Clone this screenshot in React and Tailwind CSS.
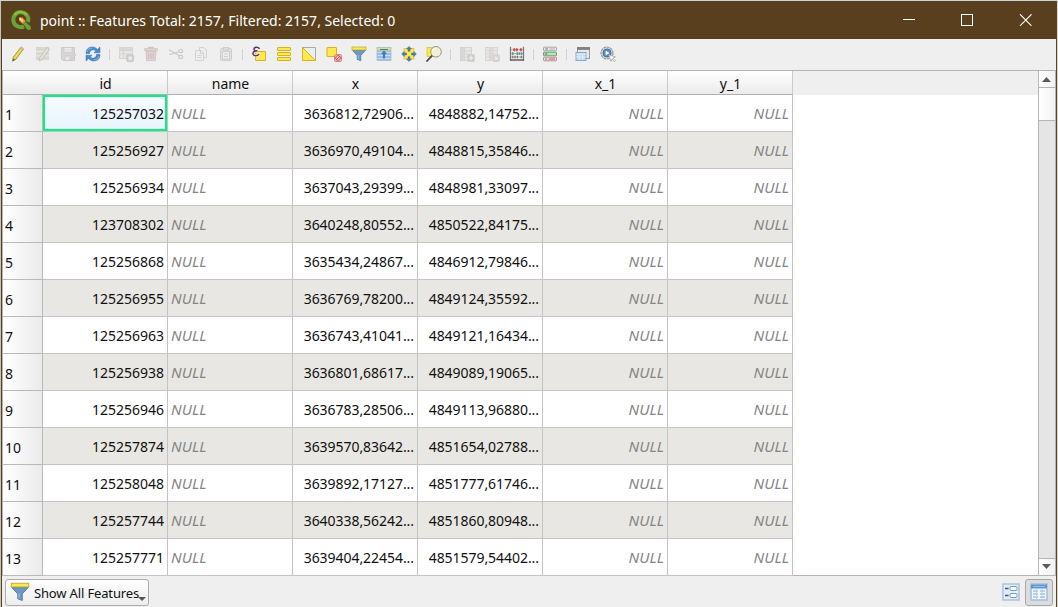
import React from "react";

const rows = [
  ["125257032", "3636812,72906...", "4848882,14752..."],
  ["125256927", "3636970,49104...", "4848815,35846..."],
  ["125256934", "3637043,29399...", "4848981,33097..."],
  ["123708302", "3640248,80552...", "4850522,84175..."],
  ["125256868", "3635434,24867...", "4846912,79846..."],
  ["125256955", "3636769,78200...", "4849124,35592..."],
  ["125256963", "3636743,41041...", "4849121,16434..."],
  ["125256938", "3636801,68617...", "4849089,19065..."],
  ["125256946", "3636783,28506...", "4849113,96880..."],
  ["125257874", "3639570,83642...", "4851654,02788..."],
  ["125258048", "3639892,17127...", "4851777,61746..."],
  ["125257744", "3640338,56242...", "4851860,80948..."],
  ["125257771", "3639404,22454...", "4851579,54402..."],
];

const Y = "#fce94f";
const YS = "#d4b41c";

const Funnel = () => (
  <>
    <path d="M1.5 4.5H14.5L9.8 9.5V14.8L6.2 13.4V9.5Z" fill="#6d97c4" stroke="#5580ab" strokeWidth=".8" />
    <path d="M7.3 9V13" stroke="#9cbcdc" />
    <rect x="1" y="1" width="14" height="3" fill={Y} stroke="#b9a63a" strokeWidth=".7" />
  </>
);

const icons = {
  pencil: (
    <>
      <path d="M3.2 11.2L10.6 1.6L13.2 3.4L6 13.2L2.6 15.2Z" fill="#e4cf3c" stroke="#8f8431" strokeWidth=".7" />
      <path d="M4.6 12L11.9 2.6" stroke="#f8ec82" strokeWidth=".9" />
      <path d="M10.3 2L11.2 .8L13.9 2.6L13 3.8Z" fill="#d8d4c8" stroke="#9b968a" strokeWidth=".5" />
      <path d="M3.1 12.5L2.5 15.3L5 13.8Z" fill="#555" />
    </>
  ),
  multiEdit: (
    <g>
      <path d="M1 3H14M1 7.6H14M1 12.2H14" stroke="#d8d7d0" strokeWidth="3.8" />
      <path d="M4.4 12.3L12.2 1.4L14.6 3L7 13.6L4 15Z" fill="#e3e0db" stroke="#c2bab8" strokeWidth=".8" />
    </g>
  ),
  save: (
    <g fill="none" stroke="#cbcbcb">
      <path d="M1.5 1.5H14.5V14.5H3L1.5 13Z" fill="#d7d7d7" />
      <rect x="4" y="1.5" width="8" height="5.4" fill="#eee" />
      <path d="M5 3.5H11M5 5.3H11" stroke="#ddd" />
      <rect x="5" y="10" width="6" height="4.5" fill="#e9e9e9" />
      <path d="M9 13L14 7.4L16 9L10.6 14Z" fill="#ddd5d5" stroke="#cfc3c3" strokeWidth=".7" />
    </g>
  ),
  refresh: (
    <g fill="#4a8bcb" stroke="#2f6cae" strokeWidth=".5">
      <path d="M1 7.5C1 3.2 3.6 1 7.2 1C9.6 1 11.2 2 12.4 3.4L15 1V6.8H9L10.8 4.9C9.6 3.9 8.4 3.6 7.2 3.9C5.2 4.4 4.6 5.6 4.6 7.5Z" />
      <path d="M15 8.5C15 12.8 12.4 15 8.8 15C6.4 15 4.8 14 3.6 12.6L1 15V9.2H7L5.2 11.1C6.4 12.1 7.6 12.4 8.8 12.1C10.8 11.6 11.4 10.4 11.4 8.5Z" />
      <path d="M2 6C2.6 3.4 4.6 2.1 7.3 2.1M14 10C13.4 12.6 11.4 13.9 8.7 13.9" fill="none" stroke="#8bbde8" strokeWidth=".9" />
    </g>
  ),
  addFeature: (
    <g stroke="#d6d5d1" fill="#e6e5e1">
      <rect x="1.5" y="2.5" width="13" height="10" />
      <path d="M1.5 1.5H14.5V4.5H1.5Z" fill="#dad9d5" />
      <path d="M1.5 8H14.5M5.5 5V12.5" />
      <rect x="8.8" y="8.8" width="6.8" height="6.8" rx="1" fill="#cdcdca" stroke="#c9c9c6" />
      <path d="M12.2 9.8V14.6M9.8 12.2H14.6M10.6 10.6L13.8 13.8M13.8 10.6L10.6 13.8" stroke="#f4f4f4" strokeWidth=".8" />
    </g>
  ),
  trash: (
    <g stroke="#d2c5c5" fill="#dfd5d5">
      <path d="M5.5 3V1.3H10.5V3" fill="none" strokeWidth="1.2" />
      <rect x="1.8" y="2.7" width="12.4" height="2" />
      <path d="M3 5.5H13L12.3 14.6H3.7Z" />
      <path d="M5.8 7V13M8 7V13M10.2 7V13" stroke="#cdbfbf" strokeWidth="1.1" />
    </g>
  ),
  cut: (
    <g fill="none" stroke="#c8c8c8" strokeWidth="1.2">
      <path d="M1 3.7L11 9.6M1.3 8.7L11 5.8" />
      <ellipse cx="12.8" cy="5.1" rx="2" ry="1.6" />
      <ellipse cx="12.8" cy="10.9" rx="2" ry="1.6" />
    </g>
  ),
  copy: (
    <g stroke="#d3d3d3" fill="#eee">
      <path d="M6.5 1.5H11L13.5 4V11.5H6.5Z" />
      <path d="M2.5 4.5H8L10.5 7V14.5H2.5Z" />
      <path d="M7.5 4.8V7.5H10.3M4.5 9.5H8.5M4.5 11.5H8.5" fill="none" />
    </g>
  ),
  paste: (
    <g stroke="#cfcfcf" fill="#dedede">
      <rect x="2.5" y="2.5" width="11" height="12" rx="1" />
      <rect x="4.5" y="5.5" width="7" height="7.5" fill="#eee" />
      <rect x="5.5" y="1.5" width="5" height="2.5" />
      <path d="M6 8H10M6 10.5H10" />
    </g>
  ),
  expression: (
    <>
      <rect x="4.5" y="5.5" width="10" height="9" rx=".5" fill={Y} stroke={YS} />
      <path d="M8.6 2.8C6.6.2 2.8 1.1 3 3.3C3.1 4.7 4.8 5.1 6.4 4.8C3.7 4.9 1.6 6.1 2 8.1C2.5 10.2 6.2 10.3 8 8.2" fill="none" stroke="#f1eff3" strokeWidth="3" />
      <path d="M8.6 2.8C6.6.2 2.8 1.1 3 3.3C3.1 4.7 4.8 5.1 6.4 4.8C3.7 4.9 1.6 6.1 2 8.1C2.5 10.2 6.2 10.3 8 8.2" fill="none" stroke="#5c3566" strokeWidth="1.5" />
    </>
  ),
  selectAll: (
    <g fill={Y} stroke={YS}>
      <rect x="1.5" y="1.5" width="13" height="3" rx=".5" />
      <rect x="1.5" y="6.5" width="13" height="3" rx=".5" />
      <rect x="1.5" y="11.5" width="13" height="3" rx=".5" />
    </g>
  ),
  invert: (
    <>
      <path d="M1.5 1.5H14.5V14.5Z" fill="#eee" stroke="#aaa" />
      <path d="M1.5 1.5L14.5 14.5H1.5Z" fill={Y} stroke={YS} />
    </>
  ),
  deselect: (
    <>
      <rect x="1" y="1.5" width="9.5" height="9" rx=".5" fill={Y} stroke={YS} />
      <rect x="8.5" y="8.5" width="7" height="7" rx="1.5" fill="#f3d3d3" stroke="#d98080" />
      <circle cx="12" cy="12" r="2.4" fill="none" stroke="#cc3b3b" strokeWidth=".9" />
      <path d="M10.3 13.7L13.7 10.3" stroke="#cc3b3b" strokeWidth=".9" />
    </>
  ),
  funnel: <Funnel />,
  moveTop: (
    <>
      <rect x="1" y="1.5" width="14" height="13" fill="#9cbfdf" stroke="#9ab7d1" strokeWidth=".7" />
      <path d="M1.5 6.5H14.5M1.5 9.5H14.5M1.5 12.5H14.5" stroke="#d0e0ee" strokeWidth=".9" />
      <rect x="1.5" y="1.8" width="13" height="2.4" fill="#e7df7e" />
      <path d="M8 4.5L11 8H9.1V12.5H6.9V8H5Z" fill="#447aad" />
      <path d="M4 3.5H12" stroke="#4d7ba5" />
    </>
  ),
  pan: (
    <>
      <rect x="3" y="2.5" width="10" height="10.5" fill={Y} stroke={YS} strokeWidth=".6" />
      <g fill="#4d7eb0" stroke="#34618f" strokeWidth=".4">
        <path d="M8 .4L10.6 3H9V5.3H7V3H5.4Z" />
        <path d="M8 15.6L10.6 13H9V10.7H7V13H5.4Z" />
        <path d="M.6 8L3.2 5.4V7H5.5V9H3.2V10.6Z" />
        <path d="M15.4 8L12.8 5.4V7H10.5V9H12.8V10.6Z" />
      </g>
    </>
  ),
  zoom: (
    <>
      <rect x="1" y="1.5" width="10" height="9" fill={Y} stroke={YS} strokeWidth=".6" />
      <path d="M5.9 9.8L1 15" stroke="#4d4a3c" strokeWidth="1.8" strokeLinecap="round" />
      <circle cx="10" cy="5.8" r="5.3" fill="#f1f0dc" fillOpacity=".93" stroke="#8b8b80" strokeWidth=".9" />
      <path d="M6.6 5C7.2 3.3 8.5 2.6 10 2.6" fill="none" stroke="#fff" />
    </>
  ),
  newField: (
    <g stroke="#d4d4d3" fill="#e7e7e5">
      <rect x="1.5" y="1.5" width="4" height="13" fill="#dadad8" />
      <rect x="5.5" y="1.5" width="7" height="13" />
      <path d="M2 5H12M2 8H12M2 11H12" />
      <rect x="8.5" y="8.5" width="7" height="7" rx="1" fill="#cdcdca" />
      <path d="M12 9.7V14.3M9.7 12H14.3" stroke="#f5f5f5" />
    </g>
  ),
  deleteField: (
    <g stroke="#d9d6d6" fill="#e9e7e6">
      <rect x="1.5" y="1.5" width="12" height="13" />
      <rect x="5.5" y="1.5" width="3.5" height="13" fill="#e2d7d7" />
      <path d="M2 4.5H13M2 8H13M2 11H10" />
      <rect x="9" y="9" width="6.5" height="6.5" rx="1" fill="#d7cfcf" />
      <path d="M10.5 10.5L14 14M14 10.5L10.5 14" stroke="#f8f5f5" />
    </g>
  ),
  abacus: (
    <>
      <path d="M1.5 .8V15M14.5 .8V15" stroke="#777" strokeWidth="1.2" />
      <path d="M1 14H15" stroke="#666" strokeWidth="1.6" />
      <path d="M2 3.8H14M2 7.6H14M2 11H14" stroke="#a5a5a5" strokeWidth=".9" />
      <g fill="#d94b4b">
        <ellipse cx="5.2" cy="3.8" rx="1.2" ry="1.8" />
        <ellipse cx="7.8" cy="3.8" rx="1.2" ry="1.8" />
        <ellipse cx="11.9" cy="3.8" rx="1.2" ry="1.8" />
      </g>
      <path d="M3.8 6.2V9M8.2 6.2V9" stroke="#4f9a69" strokeWidth="1.5" />
      <path d="M10.4 6.2V9M12.5 6.2V9" stroke="#5f8fb9" strokeWidth="1.4" />
      <path d="M3.8 9.7V12.3M6.1 9.7V12.3M8.4 9.7V12.3M12.3 9.7V12.3" stroke="#777" strokeWidth="1.3" />
    </>
  ),
  conditional: (
    <>
      <rect x="1.5" y="1.2" width="13" height="3.6" rx=".6" fill="#eee" stroke="#a5a5a5" />
      <rect x="1.5" y="6.2" width="13" height="3.6" rx=".6" fill="#a9d9aa" stroke="#6aa66d" />
      <rect x="1.5" y="11.2" width="13" height="3.6" rx=".6" fill="#f3dede" stroke="#aa9898" />
      <path d="M3.2 3H6M3.2 8H5M3.2 13H5" stroke="#555" strokeWidth=".8" />
      <path d="M7.5 3H13" stroke="#aaa" />
      <path d="M6.5 8H13" stroke="#d3f1d3" />
      <path d="M6.5 13H13" stroke="#e25050" />
    </>
  ),
  dock: (
    <>
      <rect x="2.5" y="1.5" width="12" height="11" fill="#e9e9e9" stroke="#9a9a9a" />
      <path d="M2 2.5H15" stroke="#808080" strokeWidth="2.8" />
      <rect x="1" y="6.5" width="10" height="8" fill="#c3d9ee" stroke="#84abce" />
      <path d="M1 8.2H11M1 11H11M4.3 8V14M7.7 8V14" stroke="#eaf2f9" strokeWidth=".8" />
    </>
  ),
  action: (
    <>
      <circle cx="7" cy="7" r="6" fill="#d2d2d2" stroke="#939393" strokeWidth="1.1" strokeDasharray="2.6 .8" />
      <circle cx="7" cy="7" r="4" fill="#5b92c6" stroke="#3d73a7" />
      <path d="M5.7 4.7L9.5 7L5.7 9.3Z" fill="#fff" />
      <path d="M8.6 8.6L15.5 11L12.9 12.1L15.4 14.6L14.3 15.7L11.9 13.1L10.9 15.4Z" fill="#f7f7f7" stroke="#8a8a8a" strokeWidth=".6" />
    </>
  ),
};

const toolbar = [
  ["pencil", "multiEdit", "save", "refresh"],
  ["addFeature", "trash", "cut", "copy", "paste"],
  ["expression", "selectAll", "invert", "deselect", "funnel", "moveTop", "pan", "zoom"],
  ["newField", "deleteField", "abacus"],
  ["conditional"],
  ["dock", "action"],
];

const cell = "flex h-[37px] shrink-0 items-center border-r border-b border-[#c4c4c4]";
const Null = () => (
  <span className="text-[15px] leading-5 tracking-[0.1px] text-[#858585] italic">NULL</span>
);

function TitleBar() {
  return (
    <div className="flex h-[38px] shrink-0 items-center bg-[#593f1d] text-white">
      <svg className="ml-[9px] h-5 w-5" viewBox="0 0 20 20">
        <path d="M13 16.4A7.5 7.5 0 1 1 16.9 12" fill="none" stroke="#6aa436" strokeWidth="4" />
        <path d="M3.4 5.2A7.8 7.8 0 0 1 15.6 4.8" fill="none" stroke="#8fc03d" strokeWidth="2" />
        <path d="M12 13.4L14.6 12L19.8 16.6V19.8H16.2Z" fill="#6aa436" />
        <path d="M8 7.4H11.5L14.8 11.2L11.8 14L8 10.4Z" fill="#ef8f3a" />
        <path d="M8.6 8.2L11.8 11.4" stroke="#fbe09a" strokeWidth="1.8" />
      </svg>
      <span className="ml-[9px] flex-1 whitespace-pre text-[14px]">
        point :: Features Total: 2157, Filtered: 2157, Selected: 0
      </span>
      <svg className="mr-6 h-3 w-[130px]" viewBox="0 0 130 12" fill="none" stroke="#fff">
        <path d="M1 5.5H13" />
        <rect x="59.5" y=".5" width="11" height="11" />
        <path d="M118 .3L129.5 11.8M129.5 .3L118 11.8" strokeWidth="1.1" />
      </svg>
    </div>
  );
}

function Toolbar() {
  return (
    <div className="flex h-[31px] shrink-0 items-center pb-px pl-[3px]">
      {toolbar.map((group, g) => (
        <React.Fragment key={g}>
          {g > 0 && (
            <div className="flex w-2 shrink-0 justify-center">
              <div className="h-[11px] w-px bg-[#d0d0d0]" />
            </div>
          )}
          {group.map((name) => (
            <div key={name} className="flex w-[25px] shrink-0 justify-center">
              <svg className="h-4 w-4 overflow-visible" viewBox="0 0 16 16">{icons[name]}</svg>
            </div>
          ))}
        </React.Fragment>
      ))}
    </div>
  );
}

function Table() {
  return (
    <div className="flex min-w-0 flex-1 flex-col bg-white text-[14px] text-[#101010]">
      <div className="flex h-6 shrink-0 bg-[#efefef]">
        <div className="w-10 border-b border-[#b0b0b0] bg-linear-to-b from-white to-[#ebebeb]" />
        {["id", "name", "x", "y", "x_1", "y_1"].map((h) => (
          <div
            key={h}
            className="flex w-[125px] items-center justify-center border-r border-b border-r-[#cacaca] border-b-[#b0b0b0] bg-linear-to-b from-white to-[#ebebeb] pt-0.5 pl-px"
          >
            {h}
          </div>
        ))}
      </div>
      {rows.map(([id, x, y], i) => (
        <div key={id} className="flex shrink-0">
          <div className="flex h-[37px] w-10 shrink-0 items-center border-r border-b border-[#b9b9b9] bg-linear-to-r from-white to-[#ebebeb] pt-0.5 pl-0.5">
            {i + 1}
          </div>
          <div className={i % 2 ? "flex bg-[#e8e7e3]" : "flex bg-white"}>
            {i === 0 ? (
              <div className="flex h-[37px] w-[125px] shrink-0 border-r border-b border-[#c4c4c4]">
                <div className="flex flex-1 items-center justify-end border-2 border-[#0bef80] bg-linear-to-b from-[#f6fbff] to-[#e8f3fd] pr-px">
                  {id}
                </div>
              </div>
            ) : (
              <div className={`${cell} w-[125px] justify-end pr-[3px]`}>{id}</div>
            )}
            <div className={`${cell} w-[125px] pl-[3px]`}><Null /></div>
            <div className={`${cell} w-[125px] justify-end pr-[3px] tracking-[-0.05px]`}>{x}</div>
            <div className={`${cell} w-[125px] justify-end pr-[3px] tracking-[-0.05px]`}>{y}</div>
            <div className={`${cell} w-[125px] justify-end pr-[3px]`}><Null /></div>
            <div className={`${cell} w-[125px] justify-end pr-[3px]`}><Null /></div>
          </div>
        </div>
      ))}
    </div>
  );
}

function ScrollBar() {
  return (
    <div className="flex w-[18px] shrink-0 flex-col border-x border-[#b5b5b5] bg-[#e5e5e5]">
      <div className="flex h-[17px] items-center justify-center border-b border-[#b5b5b5] bg-linear-to-r from-white to-[#f1f1f1]">
        <svg className="mr-px h-[5px] w-[9px]" viewBox="0 0 9 5"><path d="M0 5L4.5 0L9 5Z" fill="#5a5a5a" /></svg>
      </div>
      <div className="h-[33px] border-b border-[#b5b5b5] bg-linear-to-r from-white to-[#f1f1f1]" />
      <div className="flex-1" />
      <div className="flex h-[17px] items-center justify-center border-t border-[#b5b5b5] bg-linear-to-r from-white to-[#f1f1f1]">
        <svg className="mr-px mb-px h-[5px] w-[9px]" viewBox="0 0 9 5"><path d="M0 0L4.5 5L9 0Z" fill="#5a5a5a" /></svg>
      </div>
    </div>
  );
}

function Footer() {
  return (
    <div className="flex h-[31px] shrink-0 items-start pt-[3px] pr-[3px] pl-[3px]">
      <div className="flex h-[27px] w-[144px] items-center rounded-[3px] border border-[#adadad] bg-linear-to-b from-white to-[#ededed] pl-[4px] text-[#111]">
        <svg className="mb-px h-5 w-5 shrink-0" viewBox="0 0 16 16"><Funnel /></svg>
        <span className="mt-0.5 ml-1 w-26 shrink-0 text-[13px] tracking-[-0.15px] whitespace-nowrap">Show All Features</span>
        <svg className="mt-[13px] h-1 w-2 shrink-0" viewBox="0 0 8 4"><path d="M0 0H8L4 4Z" fill="#555" /></svg>
      </div>
      <div className="flex-1" />
      <div className="flex h-[27px] w-7 items-center justify-center pb-0.5">
        <svg className="h-[18px] w-[18px]" viewBox="0 0 18 18">
          <rect x="1" y="1" width="16" height="16" fill="#e4edf5" stroke="#a8c4df" strokeWidth="1.5" />
          <g fill="#fff" stroke="#719fc9">
            <rect x="8" y="3.5" width="7" height="4" rx="1" />
            <rect x="8" y="10.5" width="7" height="4" rx="1" />
          </g>
          <path d="M3 5.5H6.5M3 12.5H6.5" stroke="#36597c" strokeWidth="1.5" />
        </svg>
      </div>
      <div className="flex h-[27px] w-7 items-center justify-center rounded-[3px] border border-[#a8a8a8] bg-[#dcdcdc] pb-0.5">
        <svg className="h-[18px] w-[18px]" viewBox="0 0 18 18">
          <rect x="1" y="1" width="16" height="16" fill="#f0f5fa" stroke="#9fbfdf" strokeWidth="1.5" />
          <rect x="1" y="1.5" width="16" height="4" fill="#5e96cb" />
          <path d="M3 3.5H15" stroke="#99c1e5" />
          <path d="M3 8H8M10 8H15M3 11H8M10 11H15M3 14H8M10 14H15" stroke="#84acd3" />
          <path d="M6.5 5.5V17M12 5.5V17" stroke="#b5cde4" strokeWidth=".8" />
        </svg>
      </div>
    </div>
  );
}

export default function App() {
  return (
    <div className="flex h-[607px] w-[1058px] flex-col overflow-hidden border-t border-t-[#cdd6db] bg-[#efefef] font-['Noto_Sans','Open_Sans',sans-serif]">
      <div className="flex min-h-0 flex-1 border-r border-l border-r-[#ddd] border-l-[#c3c3c3]">
        <div className="flex min-w-0 flex-1 flex-col border-x border-[#593f1d]">
          <TitleBar />
          <Toolbar />
          <div className="flex h-[506px] shrink-0 border-y border-l border-t-[#b5b5b5] border-b-[#b5b5b5] border-l-[#b5b5b5]">
            <Table />
            <ScrollBar />
          </div>
          <Footer />
        </div>
      </div>
    </div>
  );
}
